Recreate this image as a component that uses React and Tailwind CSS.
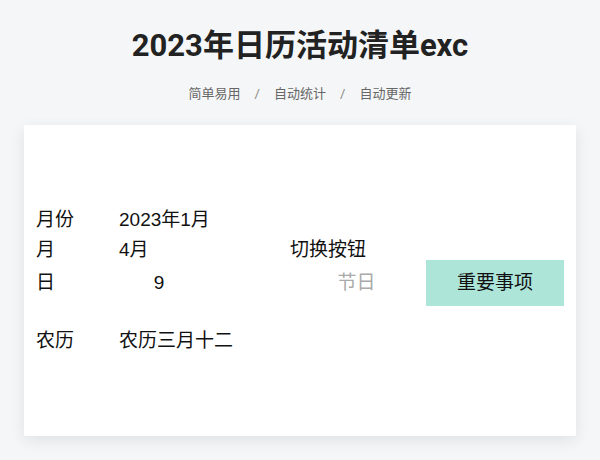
export default function App() {
  const body = { fontFamily: '"Liberation Sans", "Noto Sans CJK SC", sans-serif' };
  return (
    <div className="min-h-[460px] w-[600px] bg-[#f5f6f7] pt-[24px]" style={{ fontFamily: '"Roboto", "Noto Sans CJK SC", sans-serif' }}>
      {/* 标题 */}
      <h1 className="text-center text-[31px] leading-[44px] font-bold text-[#222]">2023年日历活动清单exc</h1>
      <div className="mt-[17px] flex justify-center items-center text-[13px] leading-[18px] text-[#666]">
        <span>简单易用</span>
        <span className="mx-[14px] text-[#888]">/</span>
        <span>自动统计</span>
        <span className="mx-[14px] text-[#888]">/</span>
        <span>自动更新</span>
      </div>

      {/* 卡片 */}
      <div
        className="mx-[24px] mt-[22px] h-[311px] bg-white px-[12px] pt-[80px] text-[19px] leading-[24px] text-[#111] shadow-[0_4px_14px_rgba(0,0,0,0.09)]"
        style={body}
      >
        <div className="flex h-[30px] items-center">
          <div className="w-[83px]">月份</div>
          <div>2023年1月</div>
        </div>
        <div className="flex h-[25px] items-end leading-[20px]">
          <div className="w-[83px]">月</div>
          <div className="w-[171px]">4月</div>
          <div>切换按钮</div>
        </div>
        <div className="flex h-[46px] items-center">
          <div className="w-[83px]">日</div>
          <div className="w-[219px] pl-[35px]">9</div>
          <div className="w-[89px] text-[#aaa]">节日</div>
          <div className="flex h-[46px] w-[138px] items-center justify-center bg-[#ade5d9]">重要事项</div>
        </div>
        <div className="mt-[20px] flex h-[30px] items-center">
          <div className="w-[83px]">农历</div>
          <div>农历三月十二</div>
        </div>
      </div>
    </div>
  );
}
